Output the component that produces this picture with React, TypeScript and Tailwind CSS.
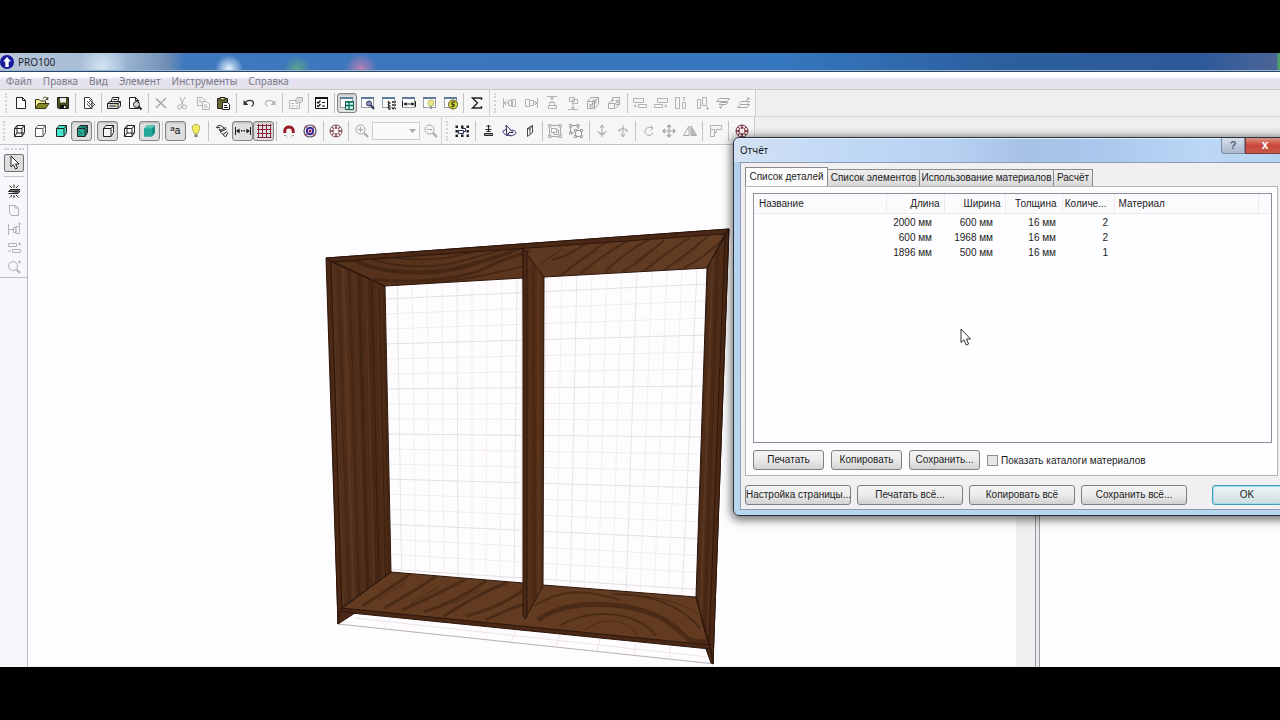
import { type ReactNode } from "react";

const K = "#222";
const G = "#b3b3b3";

const cube = (fill: string, stroke = K, hidden = false) => (
  <g stroke={stroke} fill={fill} strokeLinejoin="round">
    <path d="M3.5 5.5L6 2.5H13.5V9.5L11 13.5H3.5Z" />
    <path d="M3.5 5.5H11L13.5 2.5M11 5.5V13.5" fill="none" />
    {hidden && <path d="M6 2.5V10H13.5M6 10L3.5 13.5" fill="none" />}
  </g>
);

const win = (extra: ReactNode) => (
  <g>
    <rect x="1.5" y="2.5" width="12" height="10" fill="#fdfdfd" stroke="#9a9fa6" />
    <path d="M1 3H14" stroke="#5f7c9c" strokeWidth="2" />
    {extra}
  </g>
);

const target = (ring: string, core: string) => (
  <g fill="none" stroke={ring}>
    <circle cx="8" cy="8" r="6" />
    <circle cx="8" cy="8" r="3.5" stroke={core} />
    <path d="M8 2V6M8 10V14M2 8H6M10 8H14" strokeWidth="1.4" />
    <path d="M4 4L6 6M12 4L10 6M4 12L6 10M12 12L10 10" />
  </g>
);

const icons: Record<string, ReactNode> = {
  new: <path d="M3.5 2.5H9.5L12.5 5.5V13.5H3.5ZM9.5 2.5V5.5H12.5" fill="#fff" stroke={K} />,
  open: (
    <g stroke="#33330a">
      <path d="M1.5 13.5V4.5H5L6.5 6H11.5V8" fill="#f5f29a" />
      <path d="M1.5 13.5L4.5 8.5H15L11.5 13.5Z" fill="#85852a" />
      <path d="M9 3.5C10.5 1.5 12.5 2 13.5 4M13.8 2V4.5H11.5" fill="none" />
    </g>
  ),
  save: (
    <g>
      <path d="M2.5 2.5H13.5V13.5H3.5L2.5 12.5Z" fill="#4c4f1c" stroke={K} />
      <path d="M5 3H11V7.5H5Z" fill="#eee" />
      <path d="M5 10H11.5V14H5Z" fill="#151515" />
      <path d="M9 11H10.5V13H9Z" fill="#fff" />
    </g>
  ),
  edit: (
    <g stroke="#3a3a3a" fill="#fff">
      <path d="M3.5 2.5H8.5L11 5V13.5H3.5Z" />
      <path d="M6 6L12 12M8 4L14 10M6 9L10 13M9 6L6.5 8.5M11 8L8.5 10.5M13.5 9.5L10.5 12.5" fill="none" strokeWidth=".9" />
    </g>
  ),
  print: (
    <g stroke={K}>
      <path d="M5 7L6.5 2.5H13L11.5 7" fill="#fff" />
      <path d="M1.5 8.5L4 6.5H14.5V11L12 13.5H1.5Z" fill="#d8d8d8" />
      <path d="M1.5 8.5H12L14.5 6.5M12 8.5V13.5M3.5 11H10M7 4.5H11" fill="none" />
      <path d="M9 10H11" stroke="#b7b02c" />
    </g>
  ),
  preview: (
    <g stroke={K} fill="none">
      <path d="M2.5 2.5H8.5L11.5 5.5V13.5H2.5ZM8.5 2.5V5.5H11.5" fill="#fff" />
      <circle cx="9.5" cy="9.5" r="3" fill="#c9d7d9" />
      <path d="M11.5 11.5L14.5 14.5" strokeWidth="2" />
    </g>
  ),
  del: <path d="M3 3.5L13 13M13 3L3 13" stroke="#a2a2a2" strokeWidth="1.3" />,
  cut: (
    <g stroke={G} fill="none">
      <path d="M6 2L9 10M11 2L7 10" />
      <circle cx="5.5" cy="12" r="2" />
      <circle cx="10.5" cy="12" r="2" />
    </g>
  ),
  copy: (
    <g stroke={G} fill="#f8f8f8">
      <path d="M2.5 2.5H7L9.5 5V10.5H2.5Z" />
      <path d="M7.5 6.5H11.5L14.5 9V14.5H7.5Z" />
      <path d="M4 5H6M4 7H7M9 10H12M9 12H13" />
    </g>
  ),
  paste: (
    <g stroke={K}>
      <path d="M2.5 3.5H12.5V13.5H2.5Z" fill="#6a6a32" />
      <path d="M5 2.5H10V5H5Z" fill="#d6d27a" />
      <path d="M7.5 7.5H12.5L14.5 9.5V14.5H7.5Z" fill="#fff" />
      <path d="M9 10.5H12M9 12.5H13" />
    </g>
  ),
  undo: (
    <g>
      <path d="M4 8C6 4.5 12 4.5 12.5 8C12.5 10 11.5 11 10.5 11.5" fill="none" stroke="#333" strokeWidth="1.3" />
      <path d="M2.5 5V10H7.5Z" fill="#333" />
    </g>
  ),
  redo: (
    <g>
      <path d="M12 8C10 4.5 4 4.5 3.5 8C3.5 10 4.5 11 5.5 11.5" fill="none" stroke={G} strokeWidth="1.3" />
      <path d="M13.5 5V10H8.5Z" fill={G} />
    </g>
  ),
  props: (
    <g stroke={G} fill="#f8f8f8">
      <path d="M1.5 5.5H11.5V13.5H1.5Z" />
      <path d="M3.5 8.5H6M3.5 11H6M7.5 8.5H10M7.5 11H10" />
      <path d="M7 6L9 2.5H14.5V6L12 8Z" fill="#ddd" />
    </g>
  ),
  checks: (
    <g>
      <path d="M2.5 2.5H14.5V13.5H2.5Z" fill="#fff" stroke="#111" />
      <path d="M2 3H15" stroke="#111" strokeWidth="2" />
      <path d="M4 7L5.2 8.2L7.5 5.5M4 10.5L5.2 11.7L7.5 9M9 7.5H12M9 11H12" fill="none" stroke="#111" strokeWidth="1.2" />
    </g>
  ),
  winTable: win(
    <g>
      <path d="M6.5 6.5H14.5V14.5H6.5Z" fill="#c9f5ea" stroke="#12574b" />
      <path d="M6 7H15M7 10.5H15M10 7V14" stroke="#12705f" strokeWidth="1.4" />
    </g>,
  ),
  winZoom: win(
    <g stroke="#30305a" fill="#8b92c4">
      <circle cx="9" cy="8.5" r="2.5" />
      <path d="M11 10.5L14 14" strokeWidth="2" />
    </g>,
  ),
  winTree: win(<path d="M7.5 6V14M7.5 8H10M7.5 11H10M7.5 14H10M11 7H15M11 10H15M11 13.5H15" stroke={K} strokeWidth="1.4" strokeDasharray="2 .6" />),
  winSize: win(
    <g stroke={K} fill={K}>
      <path d="M1.5 6V12M14.5 6V12M3 9H13" />
      <path d="M2.5 9L5.5 7V11ZM13.5 9L10.5 7V11Z" stroke="none" />
    </g>,
  ),
  winLamp: win(
    <g>
      <circle cx="9" cy="8" r="3" fill="#ecea84" stroke="#bdbb5c" />
      <path d="M8 11H10V14H8Z" fill="#999" />
    </g>,
  ),
  winPrice: win(
    <g>
      <circle cx="10" cy="9.5" r="4.5" fill="#e0dd45" stroke="#55551a" />
      <path d="M12 7.5C9 6 8 8.5 9 9.5H11C12 10.5 10 12.5 8 11.5" fill="none" stroke="#44440d" strokeWidth="1.3" />
    </g>,
  ),
  sum: <path d="M12.5 5V3H3.5L8.5 8L3.5 13H12.5V11" fill="none" stroke={K} strokeWidth="1.4" />,
  alLeft: <path d="M1.5 3V13M2 8H6M4 6L2 8L4 10M6.5 5.5H10.5V10.5H6.5ZM9.5 4.5H13.5V11.5H9.5Z" fill="none" stroke={G} />,
  alRight: <path d="M14.5 3V13M14 8H10M12 6L14 8L12 10M2.5 4.5H6.5V11.5H2.5ZM6.5 5.5H10.5V10.5H6.5Z" fill="none" stroke={G} />,
  alTop: <path d="M3 1.5H13M8 2V7M6 4L8 2L10 4M5.5 7.5H10.5V10.5H5.5ZM4.5 10.5H12.5V13.5H4.5Z" fill="none" stroke={G} />,
  alBottom: <path d="M3 14.5H13M8 14V9M6 12L8 14L10 12M4.5 2.5H9.5V6.5H4.5ZM7.5 4.5H12.5V8.5H7.5Z" fill="none" stroke={G} />,
  alFront: <path d="M2.5 6.5H9.5V13.5H2.5ZM2.5 6.5L6 2.5H13.5V9L9.5 13.5M9.5 6.5L13.5 2.5M5 9.5H8V12H5ZM8 5H11V8H8ZM5 11L10 6" fill="none" stroke="#a9a9a9" />,
  alBack: <path d="M2.5 8.5H8.5V13.5H2.5ZM2.5 8.5L5 5.5H8M6.5 2.5H13.5V9.5H10M13.5 9.5L9.5 13.5M6.5 2.5V7M8 11L12 5M9.5 5.5H12V8.5" fill="none" stroke="#a9a9a9" />,
  hLeft: <path d="M1.5 3.5H11.5V7.5H1.5ZM6.5 9.5H14.5V12.5H6.5ZM2 11H5M3.5 9.5L2 11L3.5 12.5" fill="none" stroke={G} />,
  hRight: <path d="M4.5 3.5H14.5V7.5H4.5ZM1.5 9.5H9.5V12.5H1.5ZM11 11H14M12.5 9.5L14 11L12.5 12.5" fill="none" stroke={G} />,
  vTop: <path d="M2.5 2.5H6.5V13.5H2.5ZM9.5 7.5H12.5V13.5H9.5ZM11 2V6M9.5 3.5L11 2L12.5 3.5" fill="none" stroke={G} />,
  vBottom: <path d="M3.5 4.5H6.5V13.5H3.5ZM8.5 2.5H12.5V10.5H8.5ZM13.5 11V14.5M12 13L13.5 14.5L15 13" fill="none" stroke={G} />,
  dFront: <path d="M1.5 6.5L4 3.5H14.5L12 6.5ZM4 9.5L6 7.5H13L11 9.5ZM5 13L8 10M5 11V13H7" fill="none" stroke="#a6a6a6" />,
  dBack: <path d="M1.5 12.5L4 9.5H13.5L11 12.5ZM3 8.5L5 6.5H13.5L11.5 8.5M10 6L13 3M11 3H13V5" fill="none" stroke="#a6a6a6" />,

  wire: cube("none", K, true),
  hide: cube("#fff", "#555"),
  color: cube("#49e6cf"),
  texture: (
    <g>
      {cube("#2aa893")}
      <path d="M5 8L8 11M5 11L6.5 12.5M7 4H11M12.5 6V10" stroke="#0d5a4d" />
    </g>
  ),
  edges: cube("#f6f6f6"),
  semi: cube("#fff", K, true),
  shade: (
    <g>
      <path d="M3 5.5L6 2.5H14V10L11 13.5H3Z" fill="#128f80" />
      <path d="M3 5.5H11V13.5H3Z" fill="#22a897" />
      <path d="M3 5.5L6 2.5H14L11 5.5Z" fill="#56c3b5" />
    </g>
  ),
  lamp: (
    <g>
      <path d="M8 1.5C3.5 1.5 3.5 6 5.5 8.5L6.5 11H9.5L10.5 8.5C12.5 6 12.5 1.5 8 1.5Z" fill="#f1ee5e" stroke="#a7a748" />
      <path d="M6.5 11.5H9.5V14H6.5Z" fill="#777" />
    </g>
  ),
  snapPen: (
    <g stroke={K} fill="none">
      <path d="M2.5 5C2.5 2.5 6 1.5 8 3.5L10 5M3 5L6 4M7 7L12 4.5M6 9L12.5 6M7 9.5L11.5 14L14 9.5M9 11.5L13 8.5" />
      <path d="M5 6L7 8" strokeWidth="1.5" />
    </g>
  ),
  dims: (
    <g>
      <path d="M.5 4V12M15.5 4V12M2 8H5M11 8H14" stroke={K} />
      <path d="M1 8L4.5 5.5V10.5ZM15 8L11.5 5.5V10.5ZM6 8.5H7.5V7H6ZM8.5 7H10V8.5H8.5Z" fill={K} />
    </g>
  ),
  grid: <path d="M2.5 1V15M6.5 1V15M10.5 1V15M14.5 1V15M1 2.5H15.5M1 6.5H15.5M1 10.5H15.5M1 14.5H15.5" stroke="#8a2238" />,
  magnet: (
    <g>
      <path d="M3.8 10V7.5C3.8 2.8 12.2 2.8 12.2 7.5V10" fill="none" stroke="#9c1c2c" strokeWidth="3" />
      <path d="M3 12.5H5M11 12.5H13M5 14H6M10 14H11" stroke="#999" />
    </g>
  ),
  spiral: (
    <g fill="none">
      <circle cx="8" cy="8" r="6" stroke="#5b4a66" strokeWidth="1.2" />
      <circle cx="8" cy="8" r="3.2" stroke="#3b2a9a" strokeWidth="2" />
      <circle cx="8" cy="8" r="1.5" fill="#8c1e48" />
      <path d="M3 3L5 5M13 3L11 5M3 13L5 11M13 13L11 11" stroke="#a05a70" strokeWidth="1.5" />
    </g>
  ),
  target: target("#7d4c55", "#c07a86"),
  targetRed: target("#6d3440", "#c23a4c"),
  zoomIn: (
    <g fill="none" stroke="#a9a9a9">
      <circle cx="6.5" cy="6.5" r="4.5" />
      <path d="M4 6.5H9M6.5 4V9" />
      <path d="M10 10L14 14" strokeWidth="2.2" />
    </g>
  ),
  zoomOut: (
    <g fill="none" stroke="#a9a9a9">
      <circle cx="6.5" cy="6.5" r="4.5" />
      <path d="M4 6.5H9" />
      <path d="M10 10L14 14" strokeWidth="2.2" />
    </g>
  ),
  selectAll: (
    <g>
      <path d="M1.5 2.5H4V5H1.5ZM7 2.5H9.5V5H7ZM12.5 2.5H15V5H12.5ZM1.5 7H4V9.5H1.5ZM12.5 7H15V9.5H12.5ZM1.5 11.5H4V14H1.5ZM7 11.5H9.5V14H7ZM12.5 11.5H15V14H12.5Z" fill={K} />
      <path d="M4.5 7.5H9.5V10.5H4.5ZM7.5 5.5H11.5V8.5H9.5" fill="#fff" stroke="#27304e" />
    </g>
  ),
  drop: (
    <g stroke={K} fill="#fff">
      <path d="M4.5 10.5H12.5V12.5H4.5Z" fill="#aaa" />
      <path d="M8.5 2V9M6.5 4L8.5 2L10.5 4M5.5 6.5H11.5M6.5 8.5H10.5" fill="none" />
    </g>
  ),
  rotateView: (
    <g>
      <path d="M5 2L12 9.5H8L6 13Z" fill="#fff" stroke="#26234f" />
      <path d="M2 8C1 13 14 14 15 10C15 8 12 7 10.5 7M2 8L5 6.5M8 11.5L10 13.5" fill="none" stroke="#3a347c" />
    </g>
  ),
  panel: <path d="M5.5 5.5L10.5 2.5V9.5L5.5 13.5ZM5.5 5.5L8 6V11.5M10.5 2.5L8 6" fill="#fff" stroke="#444" />,
  group: <path d="M1.5 1.5H4V4H1.5ZM12 1.5H14.5V4H12ZM1.5 12H4V14.5H1.5ZM12 12H14.5V14.5H12ZM4 2.5H12M4 13.5H12M2.5 4V12M13.5 4V12M4.5 5.5H9.5V9.5H4.5ZM7 9.5V11.5H11.5V7H9.5" fill="none" stroke="#a9a9a9" />,
  ungroup: <path d="M1.5 1.5H4V4H1.5ZM9 1.5H11V4H9ZM1.5 9H4V11H1.5ZM6.5 6.5H8.5V8.5H6.5ZM12.5 6.5H14.5V8.5H12.5ZM6.5 12.5H8.5V14.5H6.5ZM12.5 12.5H14.5V14.5H12.5ZM4 2.5H9M2.5 4V9M10 4V6.5M4 10H6M8.5 7.5H12.5M7.5 8.5V12.5M13.5 8.5V12.5M8.5 13.5H12.5" fill="none" stroke="#9b9b9b" />,
  turnUp: <path d="M8 2V14M6 5L8 2L10 5M3.5 8C3.5 11 12.5 11 12.5 8M5 10.5L8 12L11 10.5" fill="none" stroke="#a9a9a9" />,
  turnDown: <path d="M8 2V14M6 11L8 14L10 11M3.5 8C3.5 5 12.5 5 12.5 8M3.5 8H6M10 8H12.5" fill="none" stroke="#a9a9a9" />,
  rotate: <path d="M11.5 5C7 3 3.5 6 4 9.5C5 13 11 13.5 12 9.5M9.5 2.5L12 5L9.5 7.5" fill="none" stroke="#a9a9a9" />,
  move: <path d="M8 2V14M2 8H14M6 4L8 2L10 4M6 12L8 14L10 12M4 6L2 8L4 10M12 6L14 8L12 10" fill="none" stroke="#a0a0a0" strokeWidth="1.2" />,
  mirror: (
    <g stroke="#a9a9a9">
      <path d="M7 3V12.5H1.5Z" fill="none" />
      <path d="M9 3V12.5H14.5Z" fill="#bbb" />
    </g>
  ),
  shape: <path d="M2.5 2.5H13.5V6.5H8.5V9.5H6.5V13.5H2.5ZM2.5 6.5H6.5V9.5" fill="none" stroke="#b0b0b0" />,

  arrow: <path d="M5 1V12L7.5 9.7L9.5 14L11.5 13L9.5 9H13Z" fill="#fff" stroke={K} />,
  bench: (
    <g stroke={K} fill="#777">
      <path d="M2.5 8.5L4.5 6.5H14L12 8.5ZM2.5 10.5H12L14 8" />
      <path d="M8 1.5V5M3.5 2.5L6 5M12.5 2.5L10 5M4 14.5L6 12M8 12V15M12.5 14.5L10 12" fill="none" />
    </g>
  ),
  sheet: <path d="M3.5 3.5H9L12.5 6V13.5H5.5L3.5 11ZM9 3.5V6H12.5" fill="none" stroke={G} />,
  sideAl: <path d="M2.5 3V14M3 8.5H7M7.5 6.5H10V11.5H7.5ZM10 5.5H13.5V12.5H10ZM12 3H15M13.5 1.5V4.5" fill="none" stroke={G} />,
  sideDist: <path d="M2.5 3.5H10.5V6.5H2.5ZM6.5 9.5H14.5V12.5H6.5ZM2 11H5M12 4H15M13.5 2.5V5.5" fill="none" stroke={G} />,
  sideZoom: (
    <g fill="none" stroke="#b0b0b0">
      <circle cx="7" cy="7" r="4.5" />
      <path d="M12 3H15M13.5 1.5V4.5" />
      <path d="M10.5 10.5L14 14" strokeWidth="2" />
    </g>
  ),
};

type Tool = { icon: string; label: string; on?: boolean } | "|" | "combo";

const t = (icon: string, label: string, on = false): Tool => ({ icon, label, on });

const standardBar: Tool[] = [
  t("new", "Новый"), t("open", "Открыть"), t("save", "Сохранить"), "|",
  t("edit", "Свойства проекта"), "|",
  t("print", "Печать"), t("preview", "Просмотр"), "|",
  t("del", "Удалить"), t("cut", "Вырезать"), t("copy", "Копировать"), t("paste", "Вставить"), "|",
  t("undo", "Отменить"), t("redo", "Повторить"), "|",
  t("props", "Свойства"), "|",
  t("checks", "Настройки"), "|",
  t("winTable", "Структура", true), t("winZoom", "Просмотр детали"), t("winTree", "Дерево"),
  t("winSize", "Размеры"), t("winLamp", "Освещение"), t("winPrice", "Цены"), "|",
  t("sum", "Отчёт"),
];

const alignBar: Tool[] = [
  t("alLeft", "Сдвинуть влево"), t("alRight", "Сдвинуть вправо"), t("alTop", "Сдвинуть вверх"),
  t("alBottom", "Сдвинуть вниз"), t("alFront", "Сдвинуть вперёд"), t("alBack", "Сдвинуть назад"), "|",
  t("hLeft", "По левому краю"), t("hRight", "По правому краю"), t("vTop", "По верху"),
  t("vBottom", "По низу"), t("dFront", "По переду"), t("dBack", "По заду"),
];

const viewBar: Tool[] = [
  t("wire", "Каркас"), t("hide", "Эскиз"), t("color", "Цвета"), t("texture", "Текстуры", true), "|",
  t("edges", "Контуры", true), t("semi", "Полупрозрачность"), t("shade", "Затенение", true), "|",
  t("labels", "Подписи", true), t("lamp", "Свет"), "|",
  t("snapPen", "Фотореализм"), t("dims", "Размерные линии", true), t("grid", "Сетка", true), "|",
  t("magnet", "Привязка"), t("spiral", "Автоцентр"), "|",
  t("target", "Центрировать"), "|",
  t("zoomIn", "Увеличить"), "combo", t("zoomOut", "Уменьшить"),
];

const editBar: Tool[] = [
  t("selectAll", "Выделить всё"), "|",
  t("drop", "Поставить"), t("rotateView", "Вращать вид"), t("panel", "Панель"), "|",
  t("group", "Группировать"), t("ungroup", "Разгруппировать"), "|",
  t("turnUp", "Повернуть вверх"), t("turnDown", "Повернуть вниз"), "|",
  t("rotate", "Поворот"), t("move", "Перемещение"), t("mirror", "Отражение"), "|",
  t("shape", "Форма"), "|",
  t("targetRed", "Центр выделения"),
];

const sideBar = [
  ["bench", "Новый элемент"], ["sheet", "Лист"], ["sideAl", "Выравнивание"],
  ["sideDist", "Распределение"], ["sideZoom", "Масштаб"],
];

const Icon = ({ name }: { name: string }) =>
  name === "labels" ? (
    <span className="flex items-center text-[10px] leading-none text-black">
      <span className="pb-1 text-[8px]">a</span>a
    </span>
  ) : (
    <svg viewBox="0 0 16 16" className="size-4 shrink-0">
      {icons[name]}
    </svg>
  );

const Tools = ({ items }: { items: Tool[] }) => (
  <>
    {items.map((item, i) =>
      item === "|" ? (
        <span key={i} className="flex w-[5px] shrink-0 justify-center">
          <span className="h-5 w-px bg-[#c4c4c4]" />
        </span>
      ) : item === "combo" ? (
        <span key={i} className="relative w-12 shrink-0">
          <select aria-label="Масштаб" className="block h-[18px] w-full appearance-none border border-[#cfcfcf] bg-[#fafafa]">
            <option></option>
          </select>
          <svg viewBox="0 0 7 4" className="pointer-events-none absolute top-[7px] right-1 h-1 w-[7px]">
            <path d="M0 0H7L3.5 4Z" fill="#aaa" />
          </svg>
        </span>
      ) : (
        <button
          key={i}
          aria-label={item.label}
          className={`flex h-5 min-w-0 flex-1 items-center justify-center rounded-[3px] border ${item.on ? "border-[#858585] bg-[#e0e0e0] shadow-[inset_0_1px_2px_#b5b5b5]" : "border-transparent"}`}
        >
          <Icon name={item.icon} />
        </button>
      ),
    )}
  </>
);

const Grip = () => <span className="mr-1 h-5 shrink-0 border-l-2 border-dotted border-[#d4d4d4]" />;

const menu = ["Файл", "Правка", "Вид", "Элемент", "Инструменты", "Справка"];

const lerp = (a: number, b: number, k: number) => a + (b - a) * k;

/* wood grain: strokes running across a face between two edges */
const Grain = ({ id, from, to, n }: { id: string; from: number[]; to: number[]; n: number }) => (
  <g clipPath={`url(#${id})`} fill="none">
    {Array.from({ length: n }, (_, i) => {
      const k = (i + 0.5 + 0.3 * Math.sin(i * 4)) / n;
      return (
        <line
          key={i}
          x1={lerp(from[0], to[0], k)}
          y1={lerp(from[1], to[1], k)}
          x2={lerp(from[2], to[2], k)}
          y2={lerp(from[3], to[3], k)}
          stroke={i % 3 === 1 ? "#6b452a" : "#2b160b"}
          strokeWidth={i % 4 === 0 ? 2 : 1}
          opacity={i % 2 ? 0.3 : 0.4}
        />
      );
    })}
  </g>
);

const faces = {
  top: "326,258 729,229 707,268 544,277 523,278 385,286",
  left: "327,259 385,286 391,572 341,608 338,624",
  right: "729,229 707,268 696,597 713,664",
  bottom: "391,572 523,583 543,585 696,597 711,647 341,609",
  mid: "523,249 544,277 543,586 525,619",
};

const Cabinet = () => (
  <svg viewBox="28 145 988 521" className="h-[521px] w-[988px] shrink-0">
    <defs>
      {Object.entries(faces).map(([id, points]) => (
        <clipPath key={id} id={id}>
          <polygon points={points} />
        </clipPath>
      ))}
      <linearGradient id="sideShade">
        <stop offset="0" stopColor="#55321d" />
        <stop offset="1" stopColor="#4a2915" />
      </linearGradient>
      <linearGradient id="topShade">
        <stop offset="0" stopColor="#54311b" />
        <stop offset=".6" stopColor="#5f3920" />
        <stop offset="1" stopColor="#643e24" />
      </linearGradient>
    </defs>

    {/* wall grid */}
    <polygon points="385,286 707,268 696,597 391,572" fill="#fefcfe" />
    <g strokeWidth="1">
      {Array.from({ length: 19 }, (_, i) => (
        <line key={i} x1="385" x2="707" y1={299 + i * 15} y2={284 + i * 17} stroke={i % 3 ? "#f0ecef" : "#e2dfe2"} />
      ))}
      {Array.from({ length: 21 }, (_, i) => (
        <line key={i} x1={397 + i * 15} x2={402 + i * 14} y1="268" y2="598" stroke={i % 4 ? "#f2edf1" : "#e8e4e8"} />
      ))}
    </g>
    <path d="M522 279V583" stroke="#f3d8d8" />

    {/* floor strip under the plinth */}
    <polygon points="354,614 706,650 711,663 338,624" fill="#fefcfe" />
    <path d="M338 624L711 663.5" stroke="#b5aeb3" />
    <path d="M355 618L708 657M390 618L384 628M516 630L511 642M560 634L556 646M600 639L597 651M636 643L634 655M670 647V659" stroke="#ebe5e8" />

    <g stroke="#2c170c" strokeLinejoin="round">
      <polygon points={faces.top} fill="url(#topShade)" />
      <polygon points={faces.bottom} fill="#623c22" />
      <polygon points={faces.left} fill="url(#sideShade)" />
      <polygon points={faces.right} fill="#4f2d18" />
    </g>

    <g clipPath="url(#top)" fill="none" stroke="#331a0c" opacity=".5">
      <path d="M350 258C378 274 430 277 466 266C492 259 512 252 530 244" strokeWidth="4" />
      <path d="M362 255C386 267 426 270 458 262L512 247" strokeWidth="2" />
      <path d="M374 279C420 286 474 275 488 267S512 258 530 251" strokeWidth="3" />
      <path d="M396 285C440 284 486 276 524 266M376 252C398 262 440 262 472 252" strokeWidth="2" />
      <path d="M552 260Q574 254 590 240M560 276Q582 258 606 242M580 274Q612 248 630 240M604 273Q624 252 650 239M622 272Q640 262 664 240M644 271Q672 248 690 238M664 270Q690 252 708 236M684 268Q704 258 722 240" strokeWidth="2" />
      <path d="M566 271L598 250M634 262L655 247M676 264L700 244M540 264L562 249" />
    </g>
    <g clipPath="url(#bottom)" fill="none" stroke="#331a0c" opacity=".48">
      <path d="M362 606Q394 586 410 574M384 608Q420 588 436 576M402 610Q430 598 466 579M424 612Q456 602 486 581M444 616Q482 592 506 583M466 616Q498 608 522 591M486 620Q510 608 530 602" strokeWidth="3" />
      <path d="M538 620C568 596 640 602 668 622S680 640 706 642" strokeWidth="5" />
      <path d="M560 626C590 606 640 612 656 636M534 606C560 590 580 588 620 600M612 594C650 594 680 604 700 628" strokeWidth="2" />
      <path d="M584 630C606 614 632 620 640 640M646 596C670 600 688 606 698 614" />
      <path d="M378 600L406 582M452 604L480 590M410 604L440 586" />
    </g>
    <Grain id="left" from={[327, 255, 340, 625]} to={[385, 280, 391, 580]} n={16} />
    <Grain id="right" from={[729, 229, 713, 664]} to={[707, 268, 696, 600]} n={6} />

    <polygon points={faces.mid} fill="#532f19" stroke="#2c170c" />
    <Grain id="mid" from={[523, 248, 524, 620]} to={[544, 272, 544, 590]} n={6} />

    {/* front edges and feet */}
    <g fill="#4b2815" stroke="#2c170c" strokeWidth="1">
      <polygon points="326,258 729,229 725,234 331,262" />
      <polygon points="326,258 331,262 342,609 338,624" />
      <polygon points="729,229 725,234 709,648 713,664" />
      <polygon points="341,608 710,645 710,649 341,612" />
      <polygon points="338,624 340,611 355,613" />
      <polygon points="706,649 711,649 713,664 711,663" />
      <polygon points="523,249 527,252 527,617 525,619 523,616" />
    </g>
    <path d="M331 262L385 286M725 234L707 268M342 608L391 572M710 645L696 597" stroke="#2c170c" fill="none" />
  </svg>
);

const tabs = ["Список элементов", "Использование материалов", "Расчёт"];
const rows = [
  ["2000 мм", "600 мм", "16 мм", "2"],
  ["600 мм", "1968 мм", "16 мм", "2"],
  ["1896 мм", "500 мм", "16 мм", "1"],
];

const btn =
  "h-5 shrink-0 whitespace-nowrap rounded-[3px] border border-[#808080] bg-linear-to-b from-[#f3f3f3] via-[#ebebeb] to-[#d2d2d2] text-center leading-none";
const th = "h-[19px] border-r border-[#ececf0] font-normal";

const ReportDialog = () => (
  <section
    role="dialog"
    aria-label="Отчёт"
    className="absolute top-[84px] -right-2.5 left-[733px] flex flex-col rounded-md border border-[#29313d] bg-linear-to-b from-[#b3cfee] to-[#b9d6ef] px-1.5 pb-[5px] text-[10px] text-[#1c1c1c] shadow-[0_2px_10px_2px_rgba(0,0,0,.55)]"
  >
    <header className="-mx-1.5 flex h-6 items-start rounded-t-md bg-[linear-gradient(90deg,#d3e2f4_0,#c4daf5_15%,#b8d2f3_38%,#a7c2e6_52%,#a9c6ec_65%,#bcd7f6_85%,#b5d2f2)] pl-1.5 shadow-[inset_0_1px_0_#e8f1fb]">
      <h1 className="font-['Noto_Sans',sans-serif] leading-6">Отчёт</h1>
      <button aria-label="Справка" className="ml-auto h-4 w-6 rounded-bl-[3px] border border-t-0 border-[#7d8ca3] bg-linear-to-b from-[#d5dfec] to-[#a9b8cc] text-[11px] font-bold leading-none text-[#5a6474]">
        ?
      </button>
      <button aria-label="Закрыть" className="mr-1 h-4 w-10 border border-t-0 border-[#7d3a3a] bg-linear-to-b from-[#dc9183] via-[#c8463a] to-[#c9584a] pb-0.5 text-xs font-bold leading-none text-white">
        x
      </button>
    </header>

    <div className="flex flex-col border border-[#8e9bb0] bg-[#f1eff1] px-1 pt-1 pb-1">
      <div role="tablist" className="flex items-end">
        <button role="tab" aria-selected="true" className="h-[19px] w-[83px] whitespace-nowrap border border-b-0 border-[#8b8b8b] bg-[#fdfdfe] leading-none">
          Список деталей
        </button>
        {tabs.map((name, i) => (
          <button
            key={name}
            role="tab"
            aria-selected="false"
            className={`h-[17px] whitespace-nowrap border border-b-0 border-l-0 border-[#8b8b8b] bg-linear-to-b from-[#f0f0f0] to-[#d8d8d8] leading-none ${["w-[92px]", "w-[134px]", "w-[39px]"][i]}`}
          >
            {name}
          </button>
        ))}
      </div>

      <div className="flex flex-col border border-[#b4b4b8] bg-[#fdfcfe] px-[7px] pt-1.5 pb-[5px]">
        <div className="-mr-0.5 h-[250px] border border-[#8d8f94] bg-[#fefdff]">
          <table className="w-full table-fixed border-collapse">
            <thead>
              <tr className="border-b border-[#e9e9ee] bg-[#fbfafc]">
                <th className={`${th} w-[132px] pl-[5px] text-left`}>Название</th>
                <th className={`${th} w-[58px] pr-1 text-right`}>Длина</th>
                <th className={`${th} w-[61px] pr-1 text-right`}>Ширина</th>
                <th className={`${th} w-[57px] pr-[5px] text-right`}>Толщина</th>
                <th className={`${th} w-[52px] pr-[7px] text-right`}>Количе...</th>
                <th className={`${th} w-36 pl-1 text-left`}>Материал</th>
                <th className="h-[19px]"></th>
              </tr>
            </thead>
            <tbody>
              <tr className="h-0.5"></tr>
              {rows.map((r, i) => (
                <tr key={i} className="h-[15px] text-right leading-[15px]">
                  <td></td>
                  <td className="pr-3">{r[0]}</td>
                  <td className="pr-3">{r[1]}</td>
                  <td className="pr-1.5">{r[2]}</td>
                  <td className="pr-1.5">{r[3]}</td>
                  <td></td>
                  <td></td>
                </tr>
              ))}
            </tbody>
          </table>
        </div>
        <div className="mt-[7px] flex items-center gap-[7px]">
          {["Печатать", "Копировать", "Сохранить..."].map((name) => (
            <button key={name} className={`${btn} w-[71px]`}>
              {name}
            </button>
          ))}
          <label className="flex items-center gap-[3px] whitespace-nowrap">
            <input type="checkbox" className="size-[11px] appearance-none border border-[#8e8f8f] bg-[#e6e6e6]" />
            Показать каталоги материалов
          </label>
        </div>
      </div>

      <div className="mt-[9px] flex gap-1.5">
        {["Настройка страницы...", "Печатать всё...", "Копировать всё", "Сохранить всё..."].map((name) => (
          <button key={name} className={`${btn} w-[106px]`}>
            {name}
          </button>
        ))}
        <button className="ml-[19px] h-5 w-[70px] shrink-0 rounded-[3px] border border-[#3c9fb8] bg-linear-to-b from-[#eef4f6] to-[#cddde2] leading-none shadow-[inset_0_0_0_1px_#9fdbe8]">
          OK
        </button>
      </div>
    </div>
  </section>
);

export default function App() {
  return (
    <main className="flex min-h-screen flex-col overflow-hidden bg-black py-[53px] font-['Liberation_Sans',Arial,sans-serif] text-[11px]">
      <div className="relative flex flex-1 flex-col overflow-hidden bg-[#f0f0f0]">
        <header className="flex h-[18px] items-center gap-1 border-b border-[#9fb6cf] bg-[radial-gradient(circle_14px_at_229px_16px,#e8f6ff,transparent),radial-gradient(circle_14px_at_297px_16px,#59a48c,transparent),radial-gradient(circle_16px_at_361px_16px,#b681b4,transparent),radial-gradient(circle_24px_at_102px_14px,#d4e4f2,transparent),linear-gradient(90deg,#b9c7d6_0,#a9bfd7_70px,#9fb9d6_120px,#7490b5_165px,#3f78bd_185px,#3a75bd_480px,#3577be_780px,#2c5f9f_1000px,#2d599b_1200px,#4b6596_1277px,#4fa26a_1278px)]">
          <svg viewBox="0 0 14 14" className="size-3.5">
            <circle cx="7" cy="7" r="7" fill="#17189c" />
            <path d="M7 2L11 6.5H8.7V12H5.3V6.5H3Z" fill="#fff" />
          </svg>
          <span className="font-['Noto_Sans',sans-serif] text-[10px] leading-none text-[#1d2430]">PRO100</span>
        </header>
        <nav className="flex h-[19px] items-center gap-[11px] border-t border-b border-t-[#25466e] border-b-[#c8c8cc] bg-linear-to-b from-white from-25% via-[#e4e2f1] via-45% to-[#e5e2ea] px-1.5 font-['Noto_Sans',sans-serif] leading-none">
          {menu.map((item) => (
            <button key={item} className="text-[10px] text-[#7b7b86]">
              {item}
            </button>
          ))}
        </nav>

        <div className="flex h-[27px] border-b border-[#d4d4d4] bg-[#efefef]">
          <div className="flex w-[490px] shrink-0 items-center border-r border-[#cfcfcf] bg-[#f6f6f6] pr-0.5 pl-[5px]">
            <Grip />
            <Tools items={standardBar} />
          </div>
          <div className="flex w-[266px] shrink-0 items-center border-r border-[#cfcfcf] bg-[#f6f6f6] pr-px pl-1">
            <Grip />
            <Tools items={alignBar} />
          </div>
        </div>
        <div className="flex h-7 border-b border-[#c3c3c8] bg-[#efefef]">
          <div className="flex w-[442px] shrink-0 items-center border-r border-[#cfcfcf] bg-[#f6f6f6] pl-[3px]">
            <Grip />
            <Tools items={viewBar} />
          </div>
          <div className="flex w-[313px] shrink-0 items-center border-r border-[#cfcfcf] bg-[#f6f6f6] pr-0.5 pl-1">
            <Grip />
            <Tools items={editBar} />
          </div>
        </div>

        <div className="flex flex-1">
          <aside className="w-7 shrink-0 border-r border-[#bcbcc4] bg-[#f6f7fa]">
            <div className="flex flex-col items-center border-b border-[#c0c0c8] pt-[3px] pb-px">
              <span className="mb-1 w-5 border-t-2 border-dotted border-[#cfcfcf]" />
              <button aria-label="Выбор" className="flex h-[18px] w-5 items-center justify-center rounded-[2px] border border-[#6f6f6f] bg-[#dedede]">
                <Icon name="arrow" />
              </button>
              <span className="my-1 h-px w-5 bg-[#c4c4c4]" />
              {sideBar.map(([icon, label]) => (
                <button key={icon} aria-label={label} className="flex h-[19px] w-5 items-center justify-center">
                  <Icon name={icon} />
                </button>
              ))}
            </div>
          </aside>
          <div className="h-[521px] min-w-0 flex-1 overflow-hidden bg-[#fdfcfe]">
            <Cabinet />
          </div>
          <div className="flex w-[264px] shrink-0">
            <div className="w-[19px] bg-[#efeff1]" />
            <div className="w-[5px] border-x border-[#9a9aa0] bg-[#e8e8ea]" />
            <div className="flex-1 bg-[#fdfcfe]" />
          </div>
        </div>

        <ReportDialog />

        <svg viewBox="0 0 12 19" className="absolute top-[275px] left-[960px] h-[19px] w-3">
          <path d="M1 1V14.5L4 11.8L6.2 17L8.6 16L6.4 11H10.5Z" fill="#fff" stroke="#333" />
        </svg>
      </div>
    </main>
  );
}
